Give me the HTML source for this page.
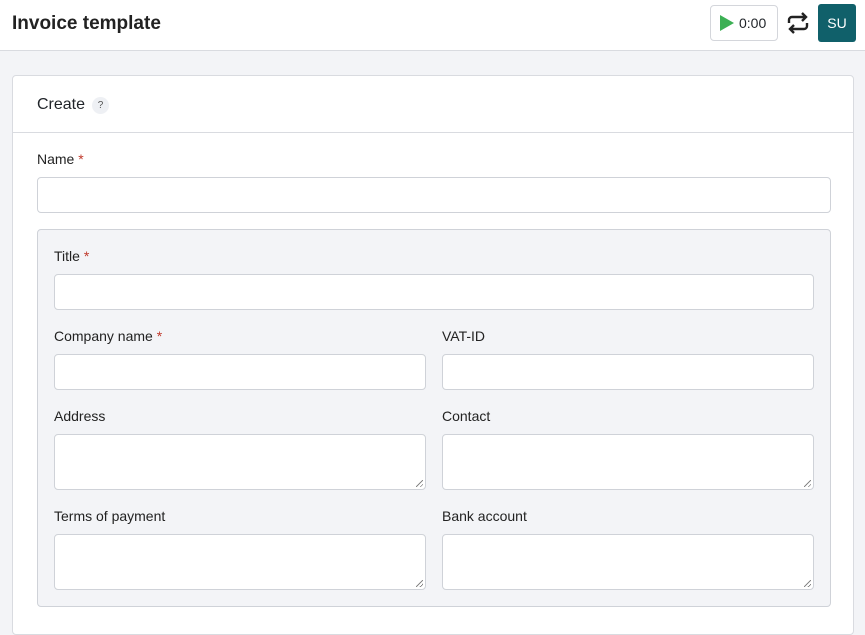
<!DOCTYPE html><html><head><style>
*{box-sizing:border-box}body{margin:0;width:865px;height:615px;overflow:hidden;background:#f3f4f7;font-family:"Liberation Sans",sans-serif;color:#1f2328}
.hdr{position:absolute;left:0;top:0;width:865px;height:51px;background:#fff;border-bottom:1px solid #d9dbe0}
.t{position:absolute;left:12px;top:13px;font-size:19px;font-weight:bold;color:#222}
.play{position:absolute;left:710px;top:5px;width:68px;height:36px;border:1px solid #d4d6db;border-radius:4px;background:#fff;font-size:14px}
.su{position:absolute;left:818px;top:4px;width:38px;height:38px;background:#10606a;border-radius:3px;color:#fff;font-size:14px;text-align:center;line-height:38px}
.card{position:absolute;left:12px;top:75px;width:842px;height:560px;background:#fff;border:1px solid #d9dbe0;border-radius:4px}
.ch{position:absolute;left:0;top:0;right:0;height:57px;border-bottom:1px solid #d9dbe0}
.lab{position:absolute;font-size:14px;color:#222}.req{color:#c0392b}
.in{position:absolute;background:#fff;border:1px solid #cfd2d8;border-radius:4px;height:36px}
.ta{height:56px}
.ta::after{content:"";position:absolute;right:2px;bottom:2px;width:7px;height:7px;background:linear-gradient(135deg,transparent 45%,#888 45%,#888 55%,transparent 55%,transparent 75%,#888 75%,#888 85%,transparent 85%)}
.panel{position:absolute;left:37px;top:229px;width:794px;height:378px;background:#f3f4f7;border:1px solid #cfd2d8;border-radius:4px}
</style></head><body>
<div class="hdr"><div class="t">Invoice template</div>
<div class="play"><svg style="position:absolute;left:8px;top:8px" width="16" height="18"><path d="M1 1L15 9L1 17Z" fill="#3cb054"/></svg><span style="position:absolute;left:28px;top:9px">0:00</span></div>
<svg style="position:absolute;left:786px;top:12px" width="24" height="22" fill="none" stroke="#222" stroke-width="2.4"><path d="M3 11V8a3 3 0 0 1 3-3h13M16 1l4 4-4 4M21 11v3a3 3 0 0 1-3 3H5M8 21l-4-4 4-4"/></svg>
<div class="su">SU</div></div>
<div class="card"><div class="ch"><span style="position:absolute;left:24px;top:20px;font-size:16px">Create</span><span style="position:absolute;left:79px;top:21px;width:17px;height:17px;border-radius:50%;background:#eef0f4;font-size:10px;text-align:center;line-height:17px;color:#555">?</span></div></div>
<div class="lab" style="left:37px;top:151px">Name <span class="req">*</span></div>
<div class="in" style="left:37px;top:177px;width:794px"></div>
<div class="panel"></div>
<div class="lab" style="left:54px;top:248px">Title <span class="req">*</span></div>
<div class="in" style="left:54px;top:274px;width:760px"></div>
<div class="lab" style="left:54px;top:328px">Company name <span class="req">*</span></div>
<div class="lab" style="left:442px;top:328px">VAT-ID</div>
<div class="in" style="left:54px;top:354px;width:372px"></div>
<div class="in" style="left:442px;top:354px;width:372px"></div>
<div class="lab" style="left:54px;top:408px">Address</div>
<div class="lab" style="left:442px;top:408px">Contact</div>
<div class="in ta" style="left:54px;top:434px;width:372px"></div>
<div class="in ta" style="left:442px;top:434px;width:372px"></div>
<div class="lab" style="left:54px;top:508px">Terms of payment</div>
<div class="lab" style="left:442px;top:508px">Bank account</div>
<div class="in ta" style="left:54px;top:534px;width:372px"></div>
<div class="in ta" style="left:442px;top:534px;width:372px"></div>
</body></html>
